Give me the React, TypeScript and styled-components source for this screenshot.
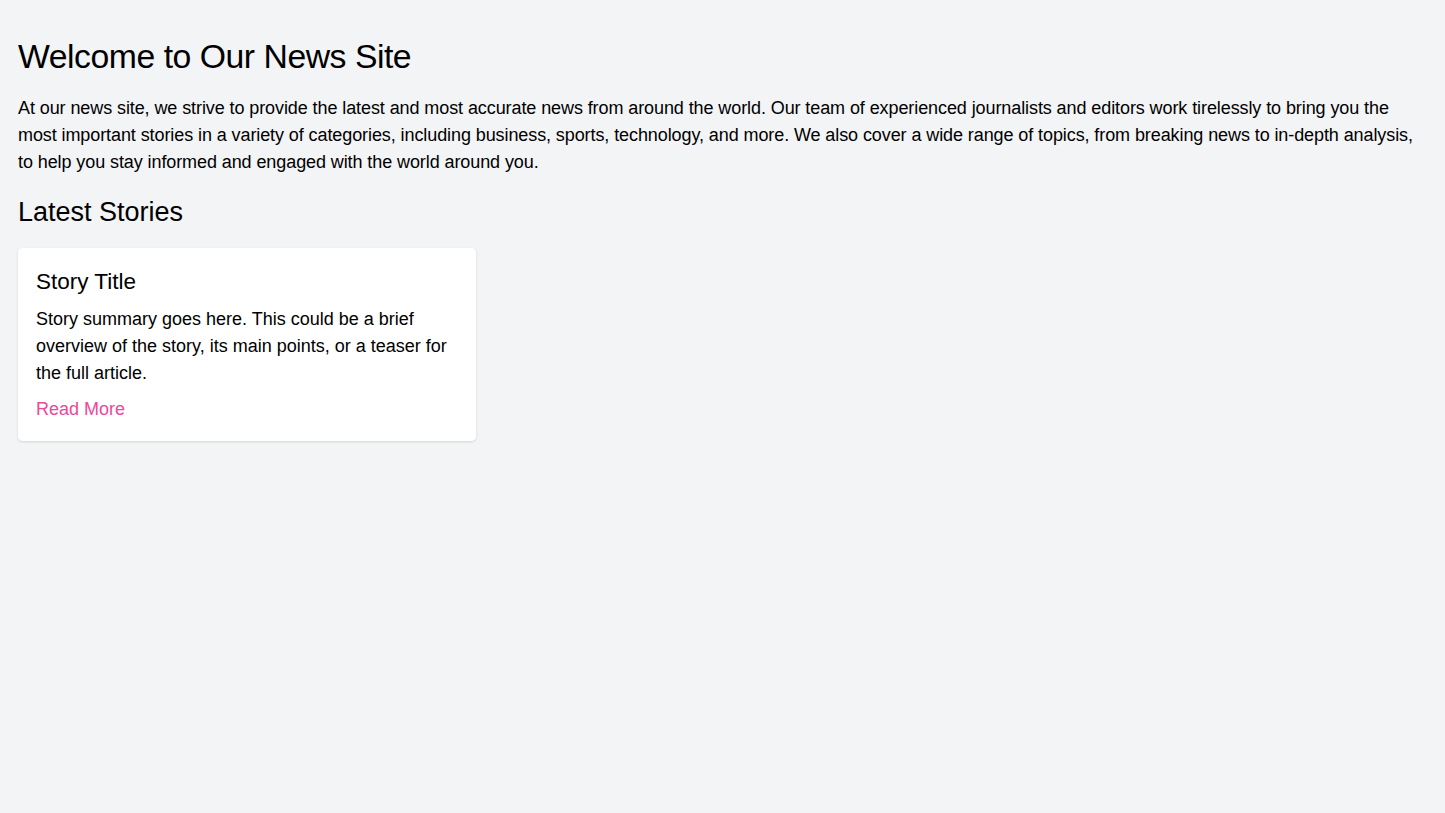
import React from 'react';
import styled, { createGlobalStyle } from 'styled-components';

const GlobalStyle = createGlobalStyle`
  html {
    font-size: 18px;
  }

  body {
    margin: 0;
    background-color: #f3f4f6;
    color: #000;
    font-family: "Liberation Sans", Arial, sans-serif;
    line-height: 1.5;
  }
`;

const Page = styled.main`
  padding: 2rem 1rem;
`;

const Title = styled.h1`
  margin: 0 0 1rem;
  font-size: 1.875rem;
  line-height: 2.25rem;
  font-weight: 400;
  letter-spacing: -0.014em;
`;

const Intro = styled.p`
  margin: 0 0 1rem;
  font-size: 1rem;
  line-height: 1.5rem;
  letter-spacing: -0.005em;
`;

const SectionTitle = styled.h2`
  margin: 0 0 1rem;
  font-size: 1.5rem;
  line-height: 2rem;
  font-weight: 400;
`;

const StoryGrid = styled.div`
  display: grid;
  grid-template-columns: repeat(3, minmax(0, 1fr));
  gap: 1rem;
`;

const StoryCard = styled.article`
  background-color: #fff;
  border-radius: 0.25rem;
  padding: 1rem;
  box-shadow: 0 1px 3px 0 rgba(0, 0, 0, 0.1), 0 1px 2px -1px rgba(0, 0, 0, 0.1);
`;

const StoryTitle = styled.h3`
  margin: 0 0 0.5rem;
  font-size: 1.25rem;
  line-height: 1.75rem;
  font-weight: 400;
`;

const StorySummary = styled.p`
  margin: 0 0 0.5rem;
  line-height: 1.5rem;
`;

const ReadMore = styled.a`
  color: #ec4899;
  text-decoration: none;
`;

type Story = {
  id: number;
  title: string;
  summary: string;
};

const stories: Story[] = [
  {
    id: 1,
    title: 'Story Title',
    summary:
      'Story summary goes here. This could be a brief overview of the story, its main points, or a teaser for the full article.',
  },
];

const App: React.FC = () => {
  return (
    <React.Fragment>
      <GlobalStyle />
      <Page>
        <Title>Welcome to Our News Site</Title>
        <Intro>
          At our news site, we strive to provide the latest and most accurate news from around the world. Our team of
          experienced journalists and editors work tirelessly to bring you the most important stories in a variety of
          categories, including business, sports, technology, and more. We also cover a wide range of topics, from
          breaking news to in-depth analysis, to help you stay informed and engaged with the world around you.
        </Intro>
        <SectionTitle>Latest Stories</SectionTitle>
        <StoryGrid>
          {stories.map((story) => (
            <StoryCard key={story.id}>
              <StoryTitle>{story.title}</StoryTitle>
              <StorySummary>{story.summary}</StorySummary>
              <ReadMore href="#">Read More</ReadMore>
            </StoryCard>
          ))}
        </StoryGrid>
      </Page>
    </React.Fragment>
  );
};

export default App;
